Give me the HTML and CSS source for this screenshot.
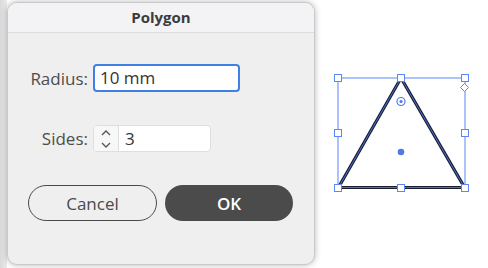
FILE: index.html
```html
<!DOCTYPE html>
<html>
<head>
<meta charset="utf-8">
<link rel="stylesheet" href="styles.css">
</head>
<body>
<div class="page">
  <div class="dialog">
    <div class="titlebar">Polygon</div>
    <div class="body">
      <div class="form">
        <label class="label">Radius:</label>
        <div class="field focused">10 mm</div>
        <label class="label">Sides:</label>
        <div class="spin">
          <div class="stepper">
            <svg width="12" height="22" viewBox="0 0 12 22"><path d="M2 7 L6 3 L10 7" fill="none" stroke="#555" stroke-width="1.3"/><path d="M2 15 L6 19 L10 15" fill="none" stroke="#555" stroke-width="1.3"/></svg>
          </div>
          <div class="spin-value">3</div>
        </div>
      </div>
      <div class="buttons">
        <button class="btn cancel">Cancel</button>
        <button class="btn ok">OK</button>
      </div>
    </div>
  </div>
  <div class="canvas">
    <svg width="168" height="268" viewBox="320 0 168 268">
      <rect x="338" y="78" width="127" height="110" fill="none" stroke="#5b86f5" stroke-width="1"/>
      <polygon points="401,78 338.5,187.5 464.5,187.5" fill="none" stroke="#1b1f33" stroke-width="3.2" stroke-linejoin="miter"/>
      <polygon points="401,78 338.5,187.5 464.5,187.5" fill="none" stroke="#4f78e8" stroke-width="0.9"/>
      <g fill="#fff" stroke="#5b86f5" stroke-width="1">
        <rect x="334.5" y="74.5" width="7" height="7"/>
        <rect x="397.5" y="74.5" width="7" height="7"/>
        <rect x="461.5" y="74.5" width="7" height="7"/>
        <rect x="334.5" y="129.5" width="7" height="7"/>
        <rect x="461.5" y="129.5" width="7" height="7"/>
        <rect x="334.5" y="184.5" width="7" height="7"/>
        <rect x="397.5" y="184.5" width="7" height="7"/>
        <rect x="461.5" y="184.5" width="7" height="7"/>
        <polygon points="464.5,83.5 468.5,87.5 464.5,91.5 460.5,87.5"/>
      </g>
      <circle cx="401" cy="101.5" r="4" fill="#fff" stroke="#4f78e8" stroke-width="1.2"/>
      <circle cx="401" cy="101.5" r="1.6" fill="#4f78e8"/>
      <circle cx="401" cy="152" r="3.3" fill="#4f78e8"/>
    </svg>
  </div>
</div>
</body>
</html>
```
FILE: styles.css
```css
html, body {
  margin: 0;
  padding: 0;
  background: #ffffff;
}
.page {
  width: 488px;
  height: 268px;
  display: flex;
  align-items: flex-start;
  background: linear-gradient(to right, #d9d9d9 0, #ececec 7px, #ffffff 7px);
}
.dialog {
  margin: 2px 0 0 7px;
  width: 308px;
  height: 263px;
  box-sizing: border-box;
  border: 1px solid #c9c9c9;
  border-radius: 10px;
  background: #efefef;
  box-shadow: 0 0 6px rgba(0,0,0,0.28);
  overflow: hidden;
  font-family: "Open Sans", "Liberation Sans", sans-serif;
  color: #4a4a4a;
  display: flex;
  flex-direction: column;
}
.titlebar {
  height: 30px;
  flex: none;
  box-sizing: border-box;
  background: #f3f3f6;
  border-bottom: 1px solid #dcdcdf;
  text-align: center;
  font-weight: 700;
  font-size: 15px;
  line-height: 29px;
  color: #3c3c3c;
}
.body {
  padding: 31px 0 0 19px;
  display: flex;
  flex-direction: column;
}
.form {
  display: grid;
  grid-template-columns: 61px auto;
  column-gap: 5px;
  row-gap: 33px;
  align-items: center;
  justify-items: start;
}
.label {
  justify-self: end;
  font-size: 17px;
  color: #4d4d4d;
}
.field {
  width: 147px;
  height: 28px;
  box-sizing: border-box;
  background: #fff;
  border-radius: 4px;
  font-size: 17px;
  line-height: 24px;
  padding-left: 5px;
  color: #333;
}
.field.focused {
  border: 2px solid #3f7fe6;
}
.spin {
  display: flex;
  height: 27px;
  width: 118px;
  box-sizing: border-box;
  border: 1px solid #dedede;
  border-radius: 4px;
  background: #fff;
  overflow: hidden;
}
.stepper {
  width: 25px;
  flex: none;
  box-sizing: border-box;
  border-right: 1px solid #dedede;
  background: #f7f7f7;
  display: flex;
  align-items: center;
  justify-content: center;
}
.spin-value {
  font-size: 17px;
  line-height: 25px;
  padding-left: 6px;
  color: #333;
}
.buttons {
  display: flex;
  gap: 8px;
  margin-top: 33px;
  margin-left: 1px;
}
.btn {
  height: 36px;
  border-radius: 18px;
  font-family: "Open Sans", "Liberation Sans", sans-serif;
  font-size: 17px;
  padding: 0;
  box-sizing: border-box;
  cursor: pointer;
}
.cancel {
  width: 129px;
  background: transparent;
  border: 1.5px solid #4a4a4a;
  color: #4a4a4a;
}
.ok {
  width: 128px;
  background: #4b4b4b;
  border: none;
  color: #fff;
  font-weight: 600;
}
.canvas {
  margin-left: 5px;
  width: 168px;
  height: 268px;
}
.canvas svg {
  display: block;
}
```
